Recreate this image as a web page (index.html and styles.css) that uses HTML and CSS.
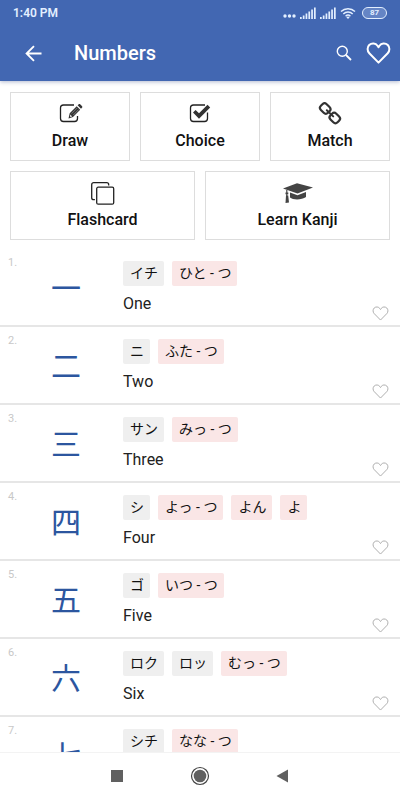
FILE: index.html
```html
<!DOCTYPE html>
<html lang="en">
<head>
<meta charset="utf-8">
<meta name="viewport" content="width=device-width, initial-scale=1">
<title>Numbers</title>
<link rel="stylesheet" href="styles.css">
</head>
<body>
<svg class="defs" aria-hidden="true">
  <symbol id="heart" viewBox="0 0 24 22">
    <path d="M12 20.6 2.8 11.2C.5 8.8.6 5.200 2.700 3 5.200.600 9.200 1 11 3.700L12 5.200l1-1.500C14.800 1 18.800.600 21.300 3c2.100 2.200 2.200 5.800-.1 8.200z" fill="none" stroke="currentColor" stroke-linejoin="round"/>
  </symbol>
  <symbol id="bars" viewBox="0 0 16 12">
    <path d="M0 10h1.700v2H0zM2.800 8.500h1.700V12H2.800zM5.600 6.500h1.700V12H5.600zM8.400 4.500h1.700V12H8.400zM11.200 2.500h1.700V12h-1.700zM14 .5h1.700V12H14z"/>
  </symbol>
</svg>
<div class="app">
  <header class="top">
    <div class="status">
      <span class="time">1:40 PM</span>
      <svg class="dots" viewBox="0 0 13 4"><circle cx="2" cy="2" r="1.700"/><circle cx="6.500" cy="2" r="1.700"/><circle cx="11" cy="2" r="1.700"/></svg>
      <svg class="signal"><use href="#bars"/></svg>
      <svg class="signal"><use href="#bars"/></svg>
      <svg class="wifi" viewBox="0 0 16 12"><path d="M1 4.500a10 10 0 0 1 14 0M3.300 7a6.700 6.700 0 0 1 9.400 0M5.600 9.200a3.500 3.500 0 0 1 4.800 0" fill="none" stroke="currentColor" stroke-width="1.500"/><path d="M8 12 6.400 10.300a2.200 2.200 0 0 1 3.200 0z"/></svg>
      <span class="battery">87</span>
    </div>
    <div class="toolbar">
      <button class="tool" aria-label="Back"><svg class="back" viewBox="0 0 18 18"><path d="M17.500 9H2M9.500 1.200 1.700 9l7.800 7.800" fill="none" stroke="currentColor" stroke-width="2"/></svg></button>
      <h1>Numbers</h1>
      <button class="tool" aria-label="Search"><svg class="search" viewBox="0 0 16 16"><circle cx="6.300" cy="6.300" r="5" fill="none" stroke="currentColor" stroke-width="1.400"/><path d="m10 10 5 5" stroke="currentColor" stroke-width="1.800"/></svg></button>
      <button class="tool" aria-label="Favourites"><svg class="fav"><use href="#heart"/></svg></button>
    </div>
  </header>
  <main>
    <div class="modes">
      <button class="mode"><svg viewBox="0 1 32 24"><path d="M20 4H9.500a3 3 0 0 0-3 3v10.500a3 3 0 0 0 3 3h11a3 3 0 0 0 3-3V15" fill="none" stroke="#222" stroke-width="1.300"/><path d="m14.500 17.500 1.200-5.300 7-7 3.500 3.500-7.200 7.200zM23.600 4.300l.9-.9c.6-.6 1.300-.6 1.900 0l1.500 1.500c.6.6.6 1.300 0 1.900l-.9.900z" fill="#333"/><path d="m17.600 12.600 5.600-5.600M19.200 14.100l5.500-5.600" stroke="#aaa" stroke-width=".6"/><path d="m16.200 13.400 2 2-2 .6z" fill="#fff"/></svg>Draw</button>
      <button class="mode"><svg viewBox="0 1 32 24"><path d="M21 4H9.500a3 3 0 0 0-3 3v10.500a3 3 0 0 0 3 3h11a3 3 0 0 0 3-3v-6" fill="none" stroke="#222" stroke-width="1.300"/><path d="m9 11.500 2.600-2.600 3.400 3.400 8.500-8.500L26.200 6.500 15 17.700z" fill="#333"/></svg>Choice</button>
      <button class="mode"><svg viewBox="0 1 32 24"><g fill="none" stroke="#333" stroke-width="2.200"><rect x="6.200" y="3.400" width="10" height="8.200" rx="3" transform="rotate(45 11.200 7.500)"/><rect x="15.800" y="12.900" width="10" height="8.200" rx="3" transform="rotate(45 20.800 17)"/></g><path d="m12.800 9.200 6.400 6.200" stroke="#333" stroke-width="2" stroke-linecap="round"/></svg>Match</button>
    </div>
    <div class="modes">
      <button class="mode"><svg viewBox="0 -1 32 24"><g fill="#fff" stroke="#222" stroke-width="1.300"><rect x="4.700" y=".7" width="17" height="17" rx="2"/><rect x="9.700" y="5.200" width="17" height="17" rx="2" stroke="#fff" stroke-width="3.600"/><rect x="9.700" y="5.200" width="17" height="17" rx="1.500"/></g></svg>Flashcard</button>
      <button class="mode"><svg viewBox="0 0 32 24"><path d="m1 7.500 14-5.300 16 4.300-15.500 6z" fill="#444"/><path d="M8 11.500v5c3 2.700 12 2.500 16-.5v-5l-8.500 3.300z" fill="#444"/><path d="M4.800 9v6" stroke="#444" stroke-width="1.200"/><path d="M4 14.500h2.200L7 21.500l-3.500.5zM3.500 11.500h2.800v1.800H3.500z" fill="#444"/></svg>Learn Kanji</button>
    </div>
    <ol class="list">
      <li class="item"><span class="num">1.</span><span class="kanji" lang="ja">一</span>
        <div class="info"><div class="tags" lang="ja"><span class="tag">イチ</span><span class="tag kun">ひと - つ</span></div><p>One</p></div>
        <button class="like" aria-label="Favourite One"><svg><use href="#heart"/></svg></button></li>
      <li class="item"><span class="num">2.</span><span class="kanji" lang="ja">二</span>
        <div class="info"><div class="tags" lang="ja"><span class="tag">ニ</span><span class="tag kun">ふた - つ</span></div><p>Two</p></div>
        <button class="like" aria-label="Favourite Two"><svg><use href="#heart"/></svg></button></li>
      <li class="item"><span class="num">3.</span><span class="kanji" lang="ja">三</span>
        <div class="info"><div class="tags" lang="ja"><span class="tag">サン</span><span class="tag kun">みっ - つ</span></div><p>Three</p></div>
        <button class="like" aria-label="Favourite Three"><svg><use href="#heart"/></svg></button></li>
      <li class="item"><span class="num">4.</span><span class="kanji" lang="ja">四</span>
        <div class="info"><div class="tags" lang="ja"><span class="tag">シ</span><span class="tag kun">よっ - つ</span><span class="tag kun">よん</span><span class="tag kun">よ</span></div><p>Four</p></div>
        <button class="like" aria-label="Favourite Four"><svg><use href="#heart"/></svg></button></li>
      <li class="item"><span class="num">5.</span><span class="kanji" lang="ja">五</span>
        <div class="info"><div class="tags" lang="ja"><span class="tag">ゴ</span><span class="tag kun">いつ - つ</span></div><p>Five</p></div>
        <button class="like" aria-label="Favourite Five"><svg><use href="#heart"/></svg></button></li>
      <li class="item"><span class="num">6.</span><span class="kanji" lang="ja">六</span>
        <div class="info"><div class="tags" lang="ja"><span class="tag">ロク</span><span class="tag">ロッ</span><span class="tag kun">むっ - つ</span></div><p>Six</p></div>
        <button class="like" aria-label="Favourite Six"><svg><use href="#heart"/></svg></button></li>
      <li class="item"><span class="num">7.</span><span class="kanji" lang="ja">七</span>
        <div class="info"><div class="tags" lang="ja"><span class="tag">シチ</span><span class="tag kun">なな - つ</span></div></div>
        <button class="like" aria-label="Favourite"><svg><use href="#heart"/></svg></button></li>
    </ol>
  </main>
  <nav class="system">
    <button aria-label="Recent apps"><svg viewBox="0 0 20 20"><path d="M4 4h12v12H4z"/></svg></button>
    <button aria-label="Home"><svg viewBox="0 0 20 20"><circle cx="10" cy="10" r="8.500" fill="none" stroke="#444" stroke-width="1.200"/><circle cx="10" cy="10" r="6.300"/></svg></button>
    <button aria-label="Back"><svg viewBox="0 0 20 20"><path d="M3.500 10 15 3.500v13z"/></svg></button>
  </nav>
</div>
</body>
</html>
```
FILE: styles.css
```css
* {
  box-sizing: border-box;
}

body {
  margin: 0;
  background: #fff;
  color: #222;
  font-family: Roboto, "Noto Sans CJK JP", sans-serif;
}

button {
  display: flex;
  align-items: center;
  justify-content: center;
  margin: 0;
  padding: 0;
  border: 0;
  background: none;
  color: inherit;
  font: inherit;
}

svg {
  display: block;
  fill: currentColor;
}

.defs {
  position: absolute;
  width: 0;
  height: 0;
}

.app {
  display: flex;
  flex-direction: column;
  height: 100vh;
}

.top {
  position: relative;
  flex: none;
  background: #4267b2;
  color: #fff;
  box-shadow: 0 1px 4px rgba(40, 60, 120, 0.35);
}

.status {
  display: flex;
  align-items: center;
  gap: 4px;
  height: 25px;
  padding: 0 13px;
  color: #e3efff;
}

.time {
  flex: 1;
  font-size: 12px;
  font-weight: 600;
}

.dots {
  width: 13px;
  height: 4px;
  margin-top: 6px;
}

.signal,
.wifi {
  width: 16px;
  height: 12px;
}

.battery {
  width: 25px;
  margin-left: 2px;
  border: 1px solid #e3efff;
  border-radius: 6px;
  background: #6585c5;
  font-size: 8px;
  font-weight: 700;
  line-height: 10px;
  text-align: center;
}

.toolbar {
  display: flex;
  align-items: center;
  height: 56px;
  padding: 0 4px 0 17px;
}

h1 {
  flex: 1;
  margin: 0;
  padding-left: 25px;
  font-size: 20px;
  font-weight: 500;
}

.tool {
  width: 32px;
  height: 40px;
}

.tool + .tool {
  width: 36px;
}

.back {
  width: 17px;
  height: 17px;
}

.search {
  width: 16px;
  height: 16px;
}

.fav {
  width: 25px;
  height: 22px;
  stroke-width: 2;
}

main {
  flex: 1;
  min-height: 0;
  overflow: hidden;
  padding-top: 11px;
}

.modes {
  display: flex;
  gap: 10px;
  padding: 0 10px;
}

.modes + .modes {
  margin-top: 10px;
}

.mode {
  flex: 1;
  flex-direction: column;
  gap: 5px;
  height: 69px;
  border: 1px solid #ddd;
  color: #111;
  font-size: 16px;
  font-weight: 500;
  line-height: 20px;
}

.mode svg {
  width: 32px;
  height: 24px;
}

.list {
  margin: 9px 0 0;
  padding: 0;
  list-style: none;
}

.item {
  display: grid;
  grid-template-columns: 16px 84px 1fr 24px;
  height: 78px;
  padding: 0 8px;
  border-bottom: 2px solid #e6e6e6;
}

.num {
  padding-top: 7px;
  color: #c8c8c8;
  font-size: 11px;
  line-height: 14px;
}

.kanji {
  padding-top: 17px;
  color: #2c569f;
  font-family: "Noto Sans CJK JP", sans-serif;
  font-size: 30px;
  line-height: 40px;
  text-align: center;
}

.info {
  padding: 12px 0 0 15px;
}

.tags {
  display: flex;
  gap: 8px;
}

.tag {
  padding: 0 6px 0 7px;
  border-radius: 2px;
  background: #efefef;
  color: #111;
  font-size: 14px;
  line-height: 25px;
  white-space: nowrap;
}

.kun {
  background: #fae6e6;
}

.info p {
  margin: 8px 0 0;
  font-size: 16px;
  line-height: 20px;
}

.like {
  align-self: end;
  height: 24px;
  color: #aaa;
}

.like svg {
  width: 17px;
  height: 15px;
  stroke-width: 1.4;
}

.system {
  display: flex;
  flex: none;
  align-items: center;
  justify-content: center;
  gap: 63px;
  height: 48px;
  padding-bottom: 1px;
  border-top: 1px solid #f3f3f3;
  background: #fff;
  color: #606060;
}

.system svg {
  width: 20px;
  height: 20px;
}
```
